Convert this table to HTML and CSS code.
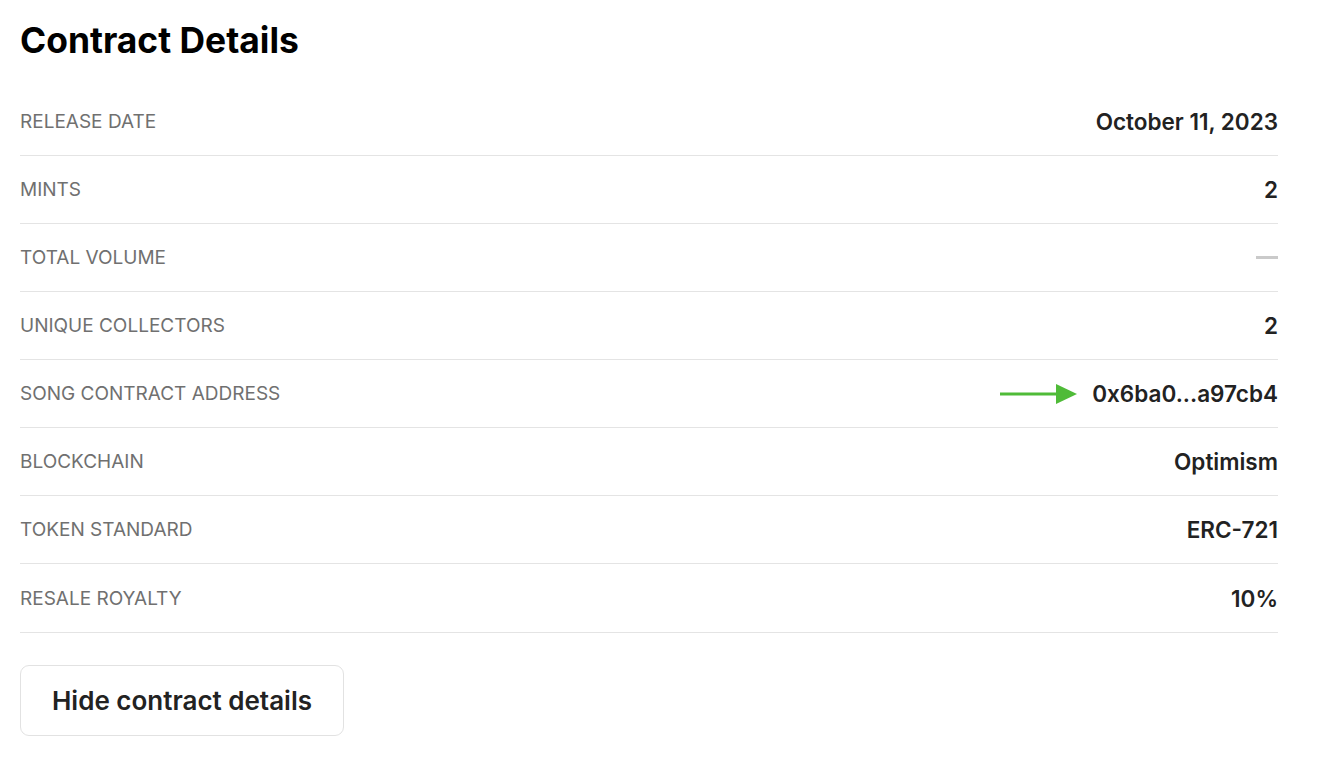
FILE: index.html
```html
<!DOCTYPE html>
<html>
<head>
<meta charset="utf-8">
<link rel="stylesheet" href="styles.css">
</head>
<body>
<main class="page">
  <h1 class="title">Contract Details</h1>
  <div class="table">
    <div class="row"><span class="label">RELEASE DATE</span><span class="value">October 11, 2023</span></div>
    <div class="row"><span class="label">MINTS</span><span class="value">2</span></div>
    <div class="row"><span class="label">TOTAL VOLUME</span><span class="dash"></span></div>
    <div class="row"><span class="label">UNIQUE COLLECTORS</span><span class="value">2</span></div>
    <div class="row">
      <span class="label">SONG CONTRACT ADDRESS</span>
      <span class="value-wrap">
        <svg class="arrow" width="78" height="22" viewBox="0 0 78 22"><line x1="0" y1="11" x2="60" y2="11" stroke="#4fbb38" stroke-width="3"/><polygon points="56,1 77,11 56,21" fill="#4fbb38"/></svg>
        <span class="value">0x6ba0...a97cb4</span>
      </span>
    </div>
    <div class="row"><span class="label">BLOCKCHAIN</span><span class="value">Optimism</span></div>
    <div class="row"><span class="label">TOKEN STANDARD</span><span class="value">ERC-721</span></div>
    <div class="row"><span class="label">RESALE ROYALTY</span><span class="value">10%</span></div>
  </div>
  <button class="btn">Hide contract details</button>
</main>
</body>
</html>
```
FILE: styles.css
```css
* { box-sizing: border-box; }
html, body { margin: 0; padding: 0; background: #fff; }
body { font-family: Inter, "Noto Sans", sans-serif; color: #222; }
.page { width: 1258px; margin-left: 20px; display: flex; flex-direction: column; }
.title { margin: 0; height: 87.5px; padding-top: 19px; font-size: 35.4px; font-weight: 700; color: #000; letter-spacing: 0; line-height: 44px; }
.table { display: flex; flex-direction: column; }
.row { height: 68.15px; border-bottom: 1px solid #e4e4e4; display: flex; align-items: center; justify-content: space-between; }
.label { font-size: 19px; color: #707070; font-weight: 400; }
.value { font-size: 22.5px; font-weight: 600; color: #222; }
.value-wrap { display: flex; align-items: center; gap: 14px; }
.arrow { display: block; }
.dash { width: 22px; height: 3px; background: #cacaca; }
.btn { align-self: flex-start; margin-top: 32px; width: 324px; height: 71px; border: 1px solid #e2e2e2; border-radius: 9px; background: #fff; font-family: Inter, sans-serif; font-size: 26px; font-weight: 600; color: #222; letter-spacing: 0; cursor: pointer; }
```
